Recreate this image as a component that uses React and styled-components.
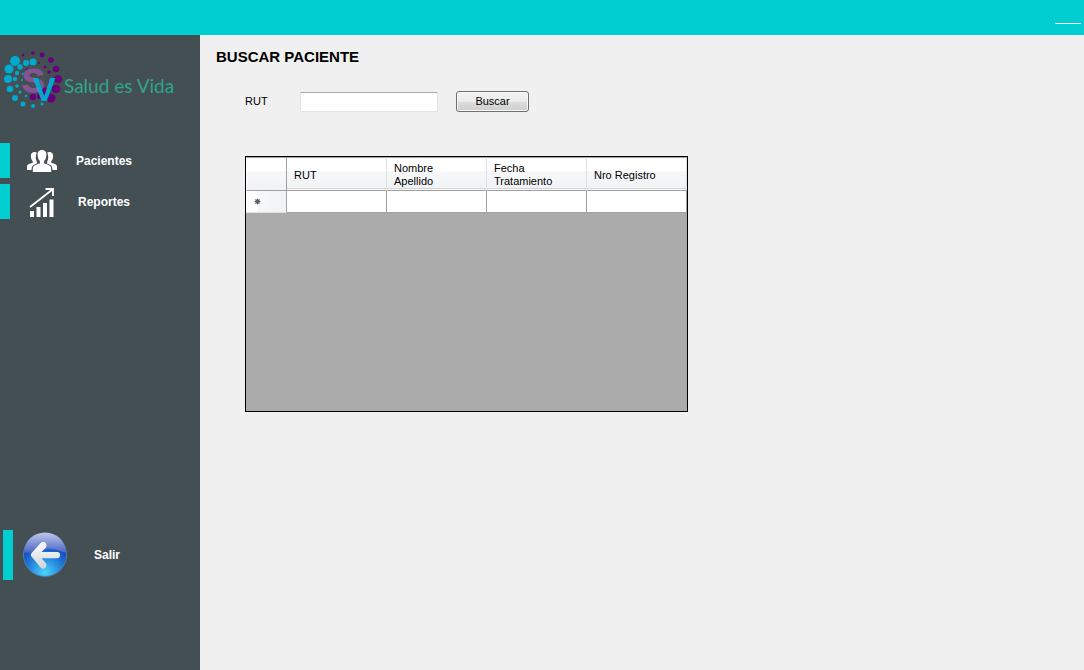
import React from "react";
import styled, { createGlobalStyle } from "styled-components";

const GlobalStyle = createGlobalStyle`
  * { box-sizing: border-box; }
  body {
    margin: 0;
    background: #f0f0f0;
    color: #000;
    font: 11px/13px "Liberation Sans", Arial, sans-serif;
  }
`;

const Page = styled.div`
  display: flex;
  flex-direction: column;
  min-height: 100vh;
`;

const TitleBar = styled.header`
  display: flex;
  justify-content: flex-end;
  height: 35px;
  background: #00ced1;
`;

const MinimizeButton = styled.button`
  display: flex;
  align-items: flex-end;
  width: 32px;
  height: 24px;
  padding: 0 3px;
  border: 0;
  background: none;

  &::after {
    content: "";
    flex: 1;
    height: 1px;
    background: #fff;
  }
`;

const Body = styled.div`
  display: flex;
  flex: 1;
`;

const Sidebar = styled.aside`
  display: flex;
  flex-direction: column;
  flex: 0 0 200px;
  padding: 10px 0 90px;
  background: #444f54;
`;

const Brand = styled.div`
  display: flex;
  align-items: center;
  height: 74px;
  margin-bottom: 24px;
`;

const BrandName = styled.span`
  padding-top: 8px;
  color: #2ea58c;
  font: 19px/24px Lato, sans-serif;
  white-space: nowrap;
`;

const Nav = styled.nav`
  display: flex;
  flex-direction: column;
  gap: 6px;
`;

const NavButton = styled.button`
  display: flex;
  align-items: center;
  height: ${(p) => p.$height || 35}px;
  margin: 0 0 0 ${(p) => p.$indent || 0}px;
  padding: 0;
  border: 0;
  border-left: 10px solid #00ced1;
  background: none;
  color: #fff;
  font: bold 12px/14px "Liberation Sans", Arial, sans-serif;
  text-align: left;
`;

const NavIcon = styled.span`
  display: flex;
  justify-content: center;
  width: 64px;
`;

const NavLabel = styled.span`
  padding-left: ${(p) => p.$gap}px;
`;

const ExitArea = styled.div`
  display: flex;
  margin-top: auto;
`;

const Content = styled.main`
  flex: 1;
  padding: 13px 16px;
`;

const Heading = styled.h1`
  margin: 0;
  font-size: 15px;
  line-height: 18px;
`;

const SearchForm = styled.form`
  display: flex;
  align-items: center;
  margin: 25px 0 44px 29px;
`;

const FieldLabel = styled.label`
  width: 55px;
`;

const TextField = styled.input`
  width: 138px;
  height: 20px;
  padding: 2px 4px;
  border: 1px solid #e2e3ea;
  border-top-color: #abadb3;
  background: #fff;
  font: inherit;
`;

const SearchButton = styled.button`
  width: 73px;
  height: 21px;
  margin-left: 18px;
  padding: 0;
  border: 1px solid #707070;
  border-radius: 3px;
  background: linear-gradient(#f2f2f2, #ebebeb 50%, #dddddd 50%, #cfcfcf);
  box-shadow: inset 0 0 0 1px #f8f8f8;
  color: #000;
  font: inherit;
`;

const GridFrame = styled.div`
  width: 443px;
  max-width: 100%;
  min-height: 256px;
  margin-left: 29px;
  border: 1px solid #000;
  background: #ababab;
`;

const Grid = styled.table`
  width: 100%;
  table-layout: fixed;
  border-collapse: separate;
  border-spacing: 0;
`;

const ColumnHeader = styled.th`
  width: ${(p) => p.$width || 100}px;
  height: 34px;
  padding: 4px 7px 2px;
  border-top: 1px solid #a0a0a0;
  border-right: 1px solid #dfe0e2;
  border-bottom: 1px solid #a0a0a0;
  background: linear-gradient(#f7f8fa 0 0) 0 100% / 100% 1px no-repeat,
    linear-gradient(#d5d5d5 0 0) 0 calc(100% - 1px) / 100% 1px no-repeat,
    linear-gradient(#fff 40%, #f7f8fa 40%, #f1f2f4);
  font-weight: normal;
  line-height: 13px;
  text-align: left;
  vertical-align: middle;
  white-space: pre-line;

  &:first-child {
    border-left: 1px solid #fff;
    border-right-color: #a0a0a0;
    background: linear-gradient(#fff 40%, #f7f8fa 40%, #f1f2f4);
  }
`;

const RowHeader = styled.th`
  height: 22px;
  padding: 0 0 0 7px;
  border-left: 1px solid #fff;
  border-right: 1px solid #a0a0a0;
  border-bottom: 1px solid #e0e0e0;
  background: linear-gradient(90deg, #fff 25%, #f7f8fa 25%, #f1f2f4);
  text-align: left;

  svg { display: block; }
`;

const Cell = styled.td`
  height: 22px;
  padding: 0;
  border-right: 1px solid #a0a0a0;
  border-bottom: 1px solid #a0a0a0;
  background: #fff;
`;

const cyanDots = [
  [15, 21, 5], [9, 29, 4.5], [8, 39, 4], [10, 49, 3.3], [15, 58, 3], [23, 64, 2.5],
  [33, 66, 2], [42, 64, 1.5], [33, 22, 3.5], [26, 23, 3], [20, 27, 2.7], [17, 33, 2.2],
  [15, 39, 2.2], [17, 46, 1.8], [20, 52, 1.5], [26, 56, 1.2], [23, 34, 1.2], [22, 40, 1],
];
const purpleDots = [
  [23, 15, 1.4], [33, 13, 1.8], [42, 15, 2.4], [51, 20, 2.8], [56, 29, 3.2], [58, 39, 4],
  [56, 49, 4.3], [51, 58, 4.5], [39, 23, 1], [45, 27, 1.4], [49, 32, 1.8], [33, 57, 3.2],
  [40, 56, 3], [45, 51, 3.5], [50, 43, 2], [27, 29, 1],
];

function LogoMark() {
  return (
    <svg width="64" height="74" viewBox="0 5 64 74" role="img" aria-label="SV">
      {purpleDots.map(([x, y, r]) => <circle key={`${x}-${y}`} cx={x} cy={y} r={r} fill="#68007b" />)}
      {cyanDots.map(([x, y, r]) => <circle key={`${x}-${y}`} cx={x} cy={y} r={r} fill="#00a9ce" />)}
      <g fontFamily="Liberation Sans, Arial, sans-serif" fontWeight="bold">
        <text x="22" y="52" fontSize="34" fill="#865397" stroke="#865397">S</text>
        <text x="33" y="61" fontSize="34" fill="#00a9ce">V</text>
      </g>
    </svg>
  );
}

function PeopleIcon() {
  return (
    <svg width="32" height="24" viewBox="0 0 32 24" fill="#fff" aria-hidden="true">
      <path d="M10.800 3.400C9.500 2.600 7 2.700 5.700 4.200 4.500 5.600 4.800 8 5.300 9.700c.3 1.200.9 1.900 1.500 2.500v1.500L3 15c-1.500.6-2 1.500-2 3v3h4.500c.1-3 .8-4.500 3-5.500l2.500-1-.2-2C9.500 10.500 9.400 6 10.800 3.400z" />
      <path d="M21.200 3.400c1.300-.8 3.800-.7 5.100.8 1.200 1.400.9 3.800.4 5.500-.3 1.200-.9 1.900-1.500 2.500v1.500L29 15c1.500.6 2 1.500 2 3v3h-4.500c-.1-3-.8-4.500-3-5.500l-2.500-1 .2-2c1.300-2 1.400-6.500 0-9.100z" />
      <path d="M16 1c-3.300 0-4.700 2.300-4.400 5.300.2 2.600 1 4.500 2.300 5.700v2.200l-4.600 1.900c-1.800.8-2.500 2-2.500 4.100V23h18.400v-2.800c0-2.100-.7-3.300-2.500-4.100l-4.600-1.900V12c1.300-1.200 2.100-3.100 2.300-5.700C20.700 3.300 19.300 1 16 1z" />
    </svg>
  );
}

function ReportIcon() {
  return (
    <svg width="26" height="32" viewBox="0 -2 26 32" fill="#fff" aria-hidden="true">
      <path d="M1 23h4v6H1zM7.500 19h4v10h-4zM14 15h4v14h-4zM20.500 11.500h4V29h-4z" />
      <path d="M1 19L23.500 1.500M16.500 1h7.500v7" fill="none" stroke="#fff" strokeWidth="1.800" />
    </svg>
  );
}

function BackIcon() {
  return (
    <svg width="46" height="46" viewBox="0 0 46 46" aria-hidden="true">
      <defs>
        <radialGradient id="ball" cx="0.5" cy="0.92" r="0.7">
          <stop offset="0" stopColor="#4bd6fa" />
          <stop offset="0.450" stopColor="#2a91e0" />
          <stop offset="1" stopColor="#1143bb" />
        </radialGradient>
        <linearGradient id="gloss" x2="0" y2="1">
          <stop offset="0" stopColor="#bfc8ea" />
          <stop offset="1" stopColor="#4965c6" />
        </linearGradient>
        <linearGradient id="arrow" x2="0" y2="1">
          <stop offset="0" stopColor="#fff" />
          <stop offset="1" stopColor="#cfd3d8" />
        </linearGradient>
      </defs>
      <circle cx="23" cy="23" r="21.500" fill="url(#ball)" stroke="#4b7fae" />
      <path d="M2 20.500a21 20 0 0 1 42 0c-7-1-12-5-20-3.500S9 22 2 20.500z" fill="url(#gloss)" />
      <path d="M18.500 11.200c1.500-1.500 3.700-1.400 5-.2s1.400 3.400 0 4.900L19.500 20H35a3.100 3.100 0 0 1 0 6.200H19.500l4 4.600c1.400 1.500 1.300 3.700 0 5s-3.500 1.200-5-.4L9.800 25c-1.300-1.400-1.300-2.800 0-4.200z" fill="url(#arrow)" />
    </svg>
  );
}

function NewRowMark() {
  return (
    <svg width="7" height="7" viewBox="0 0 7 7" aria-hidden="true">
      <circle cx="3.500" cy="3.500" r="2.300" fill="#444" />
      <path d="M3.500.5v6M.5 3.500h6M1.300 1.300l4.400 4.400M5.700 1.300L1.300 5.700" stroke="#666" strokeWidth=".8" />
    </svg>
  );
}

const columns = ["RUT", "Nombre\nApellido", "Fecha\nTratamiento", "Nro Registro"];

export default function App() {
  return (
    <Page>
      <GlobalStyle />
      <TitleBar>
        <MinimizeButton type="button" aria-label="Minimizar" />
      </TitleBar>
      <Body>
        <Sidebar>
          <Brand>
            <LogoMark />
            <BrandName>Salud es Vida</BrandName>
          </Brand>
          <Nav>
            <NavButton type="button">
              <NavIcon><PeopleIcon /></NavIcon>
              <NavLabel $gap={2}>Pacientes</NavLabel>
            </NavButton>
            <NavButton type="button">
              <NavIcon><ReportIcon /></NavIcon>
              <NavLabel $gap={4}>Reportes</NavLabel>
            </NavButton>
          </Nav>
          <ExitArea>
            <NavButton type="button" $height={50} $indent={3}>
              <NavIcon><BackIcon /></NavIcon>
              <NavLabel $gap={17}>Salir</NavLabel>
            </NavButton>
          </ExitArea>
        </Sidebar>
        <Content>
          <Heading>BUSCAR PACIENTE</Heading>
          <SearchForm onSubmit={(e) => e.preventDefault()}>
            <FieldLabel htmlFor="rut">RUT</FieldLabel>
            <TextField id="rut" type="text" />
            <SearchButton type="submit">Buscar</SearchButton>
          </SearchForm>
          <GridFrame>
            <Grid>
              <thead>
                <tr>
                  <ColumnHeader $width={41} aria-label="Fila" />
                  {columns.map((name) => (
                    <ColumnHeader key={name} scope="col">{name}</ColumnHeader>
                  ))}
                </tr>
              </thead>
              <tbody>
                <tr>
                  <RowHeader scope="row" aria-label="Fila nueva"><NewRowMark /></RowHeader>
                  {columns.map((name) => <Cell key={name} />)}
                </tr>
              </tbody>
            </Grid>
          </GridFrame>
        </Content>
      </Body>
    </Page>
  );
}
